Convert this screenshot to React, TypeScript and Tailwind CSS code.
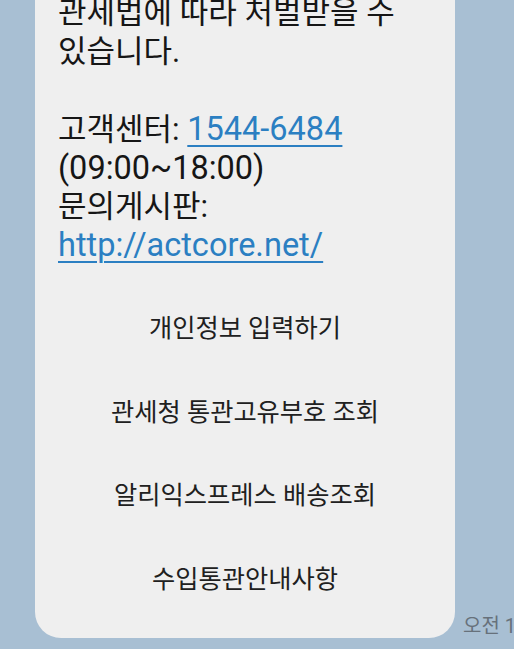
import React from "react";

const FONT = { fontFamily: '"Roboto", "Noto Sans CJK KR", sans-serif' };

const actions = [
  "개인정보 입력하기",
  "관세청 통관고유부호 조회",
  "알리익스프레스 배송조회",
  "수입통관안내사항",
];

export default function App() {
  return (
    <div
      className="h-[649px] w-[514px] overflow-hidden bg-[#a8bfd3] text-[#161616]"
      style={FONT}
    >
      <div className="flex items-end">
        <div className="ml-[35px] -mt-[6px] w-[420px] shrink-0 rounded-b-[26px] bg-[#efefef] pb-[16px]">
          <div className="pl-[23px] pr-[10px] text-[31px] leading-[38.5px] whitespace-nowrap">
            <p>관세법에 따라 처벌받을 수</p>
            <p>있습니다.</p>
            <p>&nbsp;</p>
            <p>
              고객센터:{" "}
              <a
                href="#"
                className="text-[32.5px] text-[#2b7fc2] underline decoration-[2px] underline-offset-[5px]"
              >
                1544-6484
              </a>
            </p>
            <p className="text-[32.5px]">(09:00~18:00)</p>
            <p>문의게시판:</p>
            <p>
              <a
                href="#"
                className="text-[32.5px] text-[#2b7fc2] underline decoration-[2px] underline-offset-[5px]"
              >
                http://actcore.net/
              </a>
            </p>
          </div>
          <div className="mt-[22px] flex flex-col">
            {actions.map((a) => (
              <button
                key={a}
                type="button"
                className="flex h-[83.5px] items-center justify-center text-[25.25px] text-[#202020]"
              >
                {a}
              </button>
            ))}
          </div>
        </div>
        <span className="mb-[0px] ml-[8px] whitespace-nowrap text-[20px] leading-[24px] text-[#67717b]">
          오전 11:02
        </span>
      </div>
    </div>
  );
}
